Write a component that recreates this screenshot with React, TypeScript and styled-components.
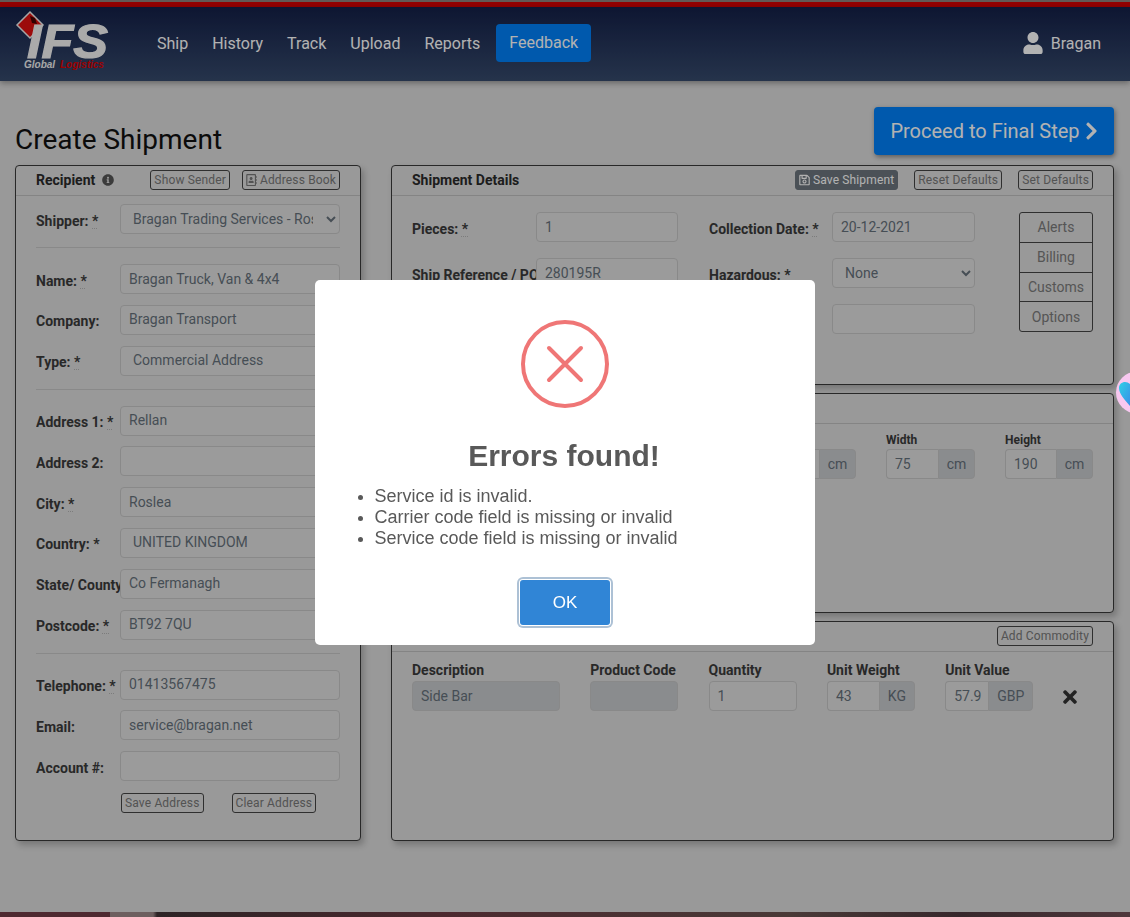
import React from 'react';
import styled, { createGlobalStyle } from 'styled-components';
import { FaUser, FaInfoCircle, FaRegAddressBook, FaRegSave, FaChevronRight, FaTimes } from 'react-icons/fa';

const Global = createGlobalStyle`
  html, body { margin: 0; padding: 0; height: 100%; background: #dbdbdb; }
  body { font-family: Roboto, "Liberation Sans", sans-serif; font-size: 14px; color: #222; overflow: hidden; }
  * { box-sizing: border-box; }
`;

const Page = styled.div`
  height: 917px; display: flex; flex-direction: column; overflow: hidden;
`;
const TopStrip = styled.div`
  height: 7px; flex: none;
  background: linear-gradient(#8f807a 0 2px, #d40000 2px);
`;
const Nav = styled.header`
  height: 74px; flex: none; display: flex; align-items: center; padding: 0 29px 2px 15px;
  background: linear-gradient(#142048, #364a6c);
  box-shadow: 0 2px 6px rgba(0,0,0,.35);
`;
const Logo = styled.svg`width: 100px; height: 72px; flex: none; margin-right: 30px;`;
const NavLink = styled.a`
  color: #fff; font-size: 16px; padding: 0 12px; line-height: 24px; margin-top: 1px;
`;
const FeedbackBtn = styled.a`
  background: #0080f8; color: #fff; font-size: 16px; height: 38px; width: 95px; margin-left: 4px;
  display: flex; align-items: center; justify-content: center; border-radius: 4px; padding-bottom: 2px;
`;
const UserBox = styled.div`
  margin-left: auto; display: flex; align-items: center; gap: 8px; color: #fff; font-size: 16px;
  svg { width: 20px; height: 22px; }
`;
const Main = styled.main`flex: 1; padding: 0 16px 0 15px; display: flex; flex-direction: column;`;
const TitleRow = styled.div`
  height: 84px; display: flex; justify-content: space-between; align-items: flex-end;
`;
const Title = styled.h1`
  font-size: 28px; font-weight: 400; margin: 0 0 8px; line-height: 34px; color: #111;
`;
const ProceedBtn = styled.button`
  width: 240px; height: 48px; margin-bottom: 10px; border: 0; border-radius: 4px; background: #0080f8; color: #fff;
  font: 400 20px Roboto, sans-serif; display: flex; align-items: center; justify-content: center; gap: 5px;
  box-shadow: 1px 2px 5px rgba(0,0,0,.4);
  svg { width: 13px; height: 20px; }
`;
const Columns = styled.div`display: flex; justify-content: space-between;`;
const Panel = styled.section<{ $w?: number; $h: number }>`
  width: ${p => (p.$w ? `${p.$w}px` : '100%')}; height: ${p => p.$h}px; flex: none;
  border: 1px solid #3a3a3a; border-radius: 4px; background: #dbdbdb;
  box-shadow: 3px 4px 6px rgba(0,0,0,.22);
`;
const RightCol = styled.div`width: 723px; display: flex; flex-direction: column; gap: 8px;`;
const PanelHead = styled.div`
  height: 30px; display: flex; align-items: center; padding: 0 20px 1px; border-bottom: 1px solid #bdbdbd;
  font-weight: 700; font-size: 14px; color: #2a2a2a;
`;
const HeadSpacer = styled.span`flex: 1;`;
const InfoIcon = styled(FaInfoCircle)`width: 12px; height: 12px; margin-left: 7px; color: #555;`;
const SmallBtn = styled.button<{ $ml?: number; $dark?: boolean }>`
  height: 20px; padding: 0 3px; margin-left: ${p => p.$ml ?? 0}px; border: 1px solid #444; border-radius: 3px;
  background: ${p => (p.$dark ? '#6c757d' : 'transparent')}; color: ${p => (p.$dark ? '#fff' : '#777')};
  border-color: ${p => (p.$dark ? '#6c757d' : '#444')};
  font: 400 12px Roboto, sans-serif; letter-spacing: .15px; display: inline-flex; align-items: center; gap: 3px; white-space: nowrap;
  svg { width: 11px; height: 12px; }
`;
const LeftBody = styled.div`padding: 8px 20px 0;`;
const FormGroup = styled.div`display: flex; flex-direction: column; gap: 10.8px; padding-bottom: 13px; border-bottom: 1px solid #c4c4c4; margin-bottom: 16px;`;
const LastGroup = styled(FormGroup)`border-bottom: 0; margin-bottom: 0; padding-bottom: 0;`;
const Row = styled.div`display: flex; height: 30px; align-items: center;`;
const Label = styled.label<{ $w?: number }>`
  width: ${p => p.$w ?? 84}px; flex: none; font-weight: 700; font-size: 14px; color: #3a3a3a; white-space: nowrap; overflow: hidden; padding-top: 3px;
`;
const Req = styled.abbr`text-decoration: underline dotted; text-underline-offset: 3px;`;
const inputCss = `
  height: 30px; border: 1px solid #c4c4c4; border-radius: 4px; background: #dfdfdf; color: #65707a;
  font: 400 14px Roboto, sans-serif; outline: none; min-width: 0;
`;
const Input = styled.input<{ $w?: number; $grey?: boolean }>`
  ${inputCss}
  width: ${p => (p.$w ? `${p.$w}px` : '100%')}; padding: 0 8px 1px;
  ${p => (p.$grey ? 'background: #c6c9cc;' : '')}
`;
const Select = styled.select<{ $w?: number }>`
  ${inputCss}
  width: ${p => (p.$w ? `${p.$w}px` : '100%')}; padding: 0 10px 1px 8px;
`;
const FormButtons = styled.div`display: flex; gap: 28px; padding: 1px 0 0 85px;`;
const DetailsBody = styled.div`display: flex; padding: 16px 20px 0;`;
const DetailsGrid = styled.div`
  display: grid; grid-template-columns: 266px 266px; column-gap: 31px; row-gap: 16px; align-content: start;
`;
const DetailRow = styled.div`display: flex; height: 30px; align-items: center;`;
const DetailLabel = styled(Label)`width: 124px;`;
const RightLabel = styled(Label)`width: 123px;`;
const DetailInput = styled(Input)`width: 142px;`;
const RightInput = styled(Input)`width: 143px;`;
const DetailSelect = styled(Select)`width: 143px;`;
const TabStack = styled.div`
  width: 74px; height: 120px; margin-left: 44px; border: 1px solid #444; border-radius: 3px; display: flex; flex-direction: column;
`;
const TabItem = styled.div`
  flex: 1; display: flex; align-items: center; justify-content: center; color: #7a7a7a; font-size: 14px;
  & + & { border-top: 1px solid #444; }
`;
const DimsRow = styled.div`display: flex; justify-content: flex-end; gap: 30px; padding: 8px 20px 0;`;
const FieldCol = styled.div<{ $w: number }>`width: ${p => p.$w}px; flex: none; display: flex; flex-direction: column;`;
const FieldLabel = styled.div<{ $s?: number }>`
  font-weight: 700; font-size: ${p => p.$s ?? 12}px; color: #3a3a3a; height: ${p => (p.$s ? 21 : 17)}px; line-height: ${p => (p.$s ? 20 : 17)}px; white-space: nowrap;
`;
const InputGroup = styled.div`display: flex; height: 30px;`;
const GroupInput = styled(Input)`flex: 1; border-radius: 4px 0 0 4px; border-right: 0; padding-right: 0; width: 10px;`;
const Addon = styled.div<{ $w: number }>`
  width: ${p => p.$w}px; flex: none; background: #c6c9cc; border: 1px solid #c4c4c4; border-radius: 0 4px 4px 0; color: #65707a;
  display: flex; align-items: center; justify-content: center; font-size: 14px;
`;
const CommodityRow = styled.div`display: flex; gap: 30.3px; padding: 8px 20px 0;`;
const RemoveBtn = styled.div`
  color: #333; margin: 27px 0 0 -3px; display: flex; width: 20px; justify-content: center;
  svg { width: 14px; height: 20px; }
`;
const Footer = styled.div`
  height: 5px; flex: none;
  background: linear-gradient(90deg, #713c45 0 110px, #9d8889 110px 153px, #423336 157px, #6f3c44 40%, #6a5350 70%, #50393f 85%, #725056);
`;
const Overlay = styled.div`
  position: fixed; inset: 0; background: rgba(0,0,0,.3); display: flex; justify-content: center; align-items: center; padding-top: 8px;
`;
const Modal = styled.div`
  width: 500px; height: 365px; background: #fff; border-radius: 5px; display: flex; flex-direction: column; align-items: center;
  padding-top: 40px; color: #545454;
`;
const ErrorIcon = styled.svg`width: 88px; height: 88px; flex: none;`;
const ModalTitle = styled.h2`font: 700 30px/36px "Liberation Sans", Arial, sans-serif; color: #595959; margin: 30px 2px 0 0;`;
const ErrList = styled.ul`
  align-self: stretch; margin: 12px 0 0; padding: 0 0 0 59.5px; font: 400 18px/21px "Liberation Sans", Arial, sans-serif; color: #595959;
`;
const OkButton = styled.button`
  width: 90px; height: 45px; margin-top: 31px; background: #3085d6; color: #fff; border: 0; border-radius: 3px;
  font: 400 17px "Liberation Sans", Arial, sans-serif; box-shadow: 0 0 0 1px #fff, 0 0 0 3px rgba(50,100,150,.4);
`;
const Widget = styled.svg`position: fixed; right: 0; top: 370px; width: 16px; height: 46px;`;

const Star = () => <Req title="required">*</Req>;

const Field = ({ label, req, value }: { label: string; req?: boolean; value?: string }) => (
  <Row>
    <Label>{label}{req && <> <Star /></>}</Label>
    <Input defaultValue={value} />
  </Row>
);
const SelectField = ({ label, value }: { label: string; value: string }) => (
  <Row>
    <Label>{label} <Star /></Label>
    <Select defaultValue={value}><option>{value}</option></Select>
  </Row>
);

const Dim = ({ label, value, w }: { label: string; value?: string; w: number }) => (
  <FieldCol $w={w}>
    <FieldLabel>{label}</FieldLabel>
    <InputGroup><GroupInput defaultValue={value} /><Addon $w={37}>cm</Addon></InputGroup>
  </FieldCol>
);

export default function App() {
  return (
    <Page>
      <Global />
      <TopStrip />
      <Nav>
        <Logo viewBox="0 0 100 72">
          <path d="M15 5 L2 18 L15 31 L28 18 Z" fill="#e01010" stroke="#eee" strokeWidth="1.5" />
          <path d="M15 9 l5 2 l2 6 l-5 -1 Z" fill="#400" />
          <text x="12" y="51" fill="#f4f4f4" stroke="#f4f4f4" strokeWidth="1.2" fontFamily="Liberation Sans" fontWeight="700" fontStyle="italic" fontSize="49" textLength="81" lengthAdjust="spacingAndGlyphs">IFS</text>
          <text x="9" y="61" fill="#f0f0f0" fontFamily="Liberation Sans" fontWeight="700" fontStyle="italic" fontSize="10">Global</text>
          <text x="45" y="61" fill="#e00000" fontFamily="Liberation Sans" fontWeight="700" fontStyle="italic" fontSize="10">Logistics</text>
        </Logo>
        <NavLink>Ship</NavLink>
        <NavLink>History</NavLink>
        <NavLink>Track</NavLink>
        <NavLink>Upload</NavLink>
        <NavLink>Reports</NavLink>
        <FeedbackBtn>Feedback</FeedbackBtn>
        <UserBox><FaUser />Bragan</UserBox>
      </Nav>
      <Main>
        <TitleRow>
          <Title>Create Shipment</Title>
          <ProceedBtn>Proceed to Final Step <FaChevronRight /></ProceedBtn>
        </TitleRow>
        <Columns>
          <Panel $w={346} $h={676}>
            <PanelHead>
              Recipient <InfoIcon />
              <HeadSpacer />
              <SmallBtn>Show Sender</SmallBtn>
              <SmallBtn $ml={12}><FaRegAddressBook />Address Book</SmallBtn>
            </PanelHead>
            <LeftBody>
              <FormGroup>
                <SelectField label="Shipper:" value="Bragan Trading Services - Roslea" />
              </FormGroup>
              <FormGroup>
                <Field label="Name:" req value="Bragan Truck, Van & 4x4" />
                <Field label="Company:" value="Bragan Transport" />
                <SelectField label="Type:" value="Commercial Address" />
              </FormGroup>
              <FormGroup>
                <Field label="Address 1:" req value="Rellan" />
                <Field label="Address 2:" />
                <Field label="City:" req value="Roslea" />
                <SelectField label="Country:" value="UNITED KINGDOM" />
                <Field label="State/ County:" value="Co Fermanagh" />
                <Field label="Postcode:" req value="BT92 7QU" />
              </FormGroup>
              <LastGroup>
                <Field label="Telephone:" req value="01413567475" />
                <Field label="Email:" value="service@bragan.net" />
                <Field label="Account #:" />
                <FormButtons>
                  <SmallBtn>Save Address</SmallBtn>
                  <SmallBtn>Clear Address</SmallBtn>
                </FormButtons>
              </LastGroup>
            </LeftBody>
          </Panel>
          <RightCol>
            <Panel $h={220}>
              <PanelHead>
                Shipment Details
                <HeadSpacer />
                <SmallBtn $dark><FaRegSave />Save Shipment</SmallBtn>
                <SmallBtn $ml={16}>Reset Defaults</SmallBtn>
                <SmallBtn $ml={16}>Set Defaults</SmallBtn>
              </PanelHead>
              <DetailsBody>
                <DetailsGrid>
                  <DetailRow><DetailLabel>Pieces: <Star /></DetailLabel><DetailInput defaultValue="1" /></DetailRow>
                  <DetailRow><RightLabel>Collection Date: <Star /></RightLabel><RightInput defaultValue="20-12-2021" /></DetailRow>
                  <DetailRow><DetailLabel>Ship Reference / PO</DetailLabel><DetailInput defaultValue="280195R" /></DetailRow>
                  <DetailRow><RightLabel>Hazardous: <Star /></RightLabel><DetailSelect defaultValue="None"><option>None</option></DetailSelect></DetailRow>
                  <DetailRow />
                  <DetailRow><RightLabel /><RightInput /></DetailRow>
                </DetailsGrid>
                <TabStack>
                  <TabItem>Alerts</TabItem>
                  <TabItem>Billing</TabItem>
                  <TabItem>Customs</TabItem>
                  <TabItem>Options</TabItem>
                </TabStack>
              </DetailsBody>
            </Panel>
            <Panel $h={220}>
              <PanelHead />
              <DimsRow>
                <Dim label="Length" w={89} />
                <Dim label="Width" value="75" w={89} />
                <Dim label="Height" value="190" w={88} />
              </DimsRow>
            </Panel>
            <Panel $h={220}>
              <PanelHead>
                <HeadSpacer />
                <SmallBtn>Add Commodity</SmallBtn>
              </PanelHead>
              <CommodityRow>
                <FieldCol $w={148}><FieldLabel $s={14}>Description</FieldLabel><Input $grey defaultValue="Side Bar" /></FieldCol>
                <FieldCol $w={88}><FieldLabel $s={14}>Product Code</FieldLabel><Input $grey /></FieldCol>
                <FieldCol $w={88}><FieldLabel $s={14}>Quantity</FieldLabel><Input defaultValue="1" /></FieldCol>
                <FieldCol $w={88}><FieldLabel $s={14}>Unit Weight</FieldLabel><InputGroup><GroupInput defaultValue="43" /><Addon $w={36}>KG</Addon></InputGroup></FieldCol>
                <FieldCol $w={88}><FieldLabel $s={14}>Unit Value</FieldLabel><InputGroup><GroupInput defaultValue="57.9" /><Addon $w={45}>GBP</Addon></InputGroup></FieldCol>
                <RemoveBtn><FaTimes /></RemoveBtn>
              </CommodityRow>
            </Panel>
          </RightCol>
        </Columns>
      </Main>
      <Footer />
      <Overlay>
        <Modal>
          <ErrorIcon viewBox="0 0 88 88">
            <circle cx="44" cy="44" r="42" fill="none" stroke="#ef7676" strokeWidth="4" />
            <path d="M28 28 L60 60 M60 28 L28 60" stroke="#ef7676" strokeWidth="4" strokeLinecap="round" />
          </ErrorIcon>
          <ModalTitle>Errors found!</ModalTitle>
          <ErrList>
            <li>Service id is invalid.</li>
            <li>Carrier code field is missing or invalid</li>
            <li>Service code field is missing or invalid</li>
          </ErrList>
          <OkButton>OK</OkButton>
        </Modal>
      </Overlay>
      <Widget viewBox="0 0 16 46">
        <defs>
          <linearGradient id="heart" x1="0" y1="0" x2="1" y2="1">
            <stop offset="0" stopColor="#2fd0e6" />
            <stop offset="1" stopColor="#3a8fe8" />
          </linearGradient>
        </defs>
        <circle cx="23" cy="22.5" r="21" fill="#f8c8f0" />
        <path d="M5 18 C 5 12, 12 10, 16 14 L 16 36 C 11 30, 5 24, 5 18 Z" fill="url(#heart)" />
      </Widget>
    </Page>
  );
}
